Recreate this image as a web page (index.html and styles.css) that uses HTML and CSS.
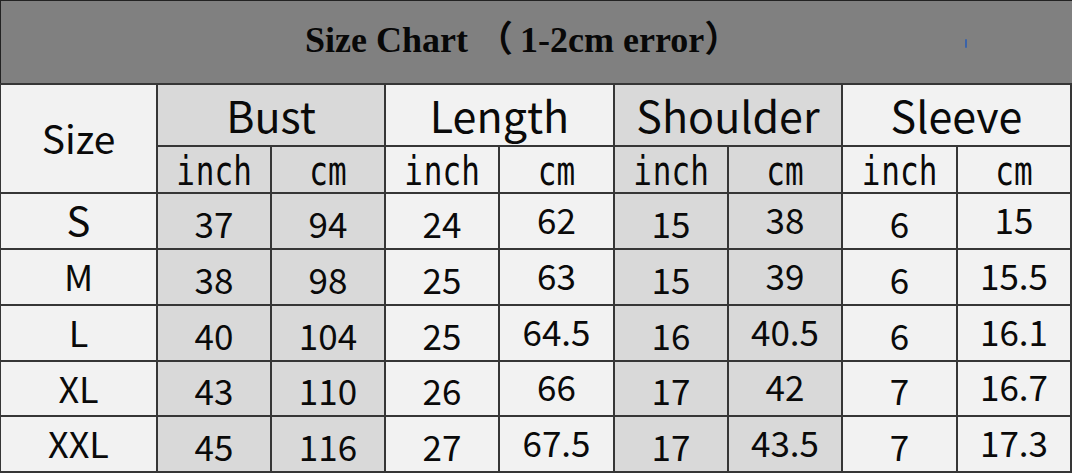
FILE: index.html
```html
<!DOCTYPE html>
<html lang="en">
<head>
<meta charset="utf-8">
<title>Size Chart</title>
<link rel="stylesheet" href="styles.css">
</head>
<body>
<div class="chart">
  <div class="title">
    <h1 class="title-text">Size Chart <span class="paren-open">（</span>1-2cm error）</h1>
    <span class="mark"></span>
  </div>
  <div class="grid">
    <div class="cell light size-head">Size</div>
    <div class="cell gray group span2">Bust</div>
    <div class="cell light group span2">Length</div>
    <div class="cell gray group span2">Shoulder</div>
    <div class="cell light group span2">Sleeve</div>

    <div class="cell gray sub"><span class="unit"><span class="ii">i</span>nch</span></div>
    <div class="cell gray sub"><span class="unit">cm</span></div>
    <div class="cell light sub"><span class="unit"><span class="ii">i</span>nch</span></div>
    <div class="cell light sub"><span class="unit">cm</span></div>
    <div class="cell gray sub"><span class="unit"><span class="ii">i</span>nch</span></div>
    <div class="cell gray sub"><span class="unit">cm</span></div>
    <div class="cell light sub"><span class="unit"><span class="ii">i</span>nch</span></div>
    <div class="cell light sub"><span class="unit">cm</span></div>

    <div class="cell light label big">S</div>
    <div class="cell gray num low">37</div>
    <div class="cell gray num low">94</div>
    <div class="cell light num low">24</div>
    <div class="cell light num high">62</div>
    <div class="cell gray num low">15</div>
    <div class="cell gray num high">38</div>
    <div class="cell light num low">6</div>
    <div class="cell light num high">15</div>

    <div class="cell light label">M</div>
    <div class="cell gray num low">38</div>
    <div class="cell gray num low">98</div>
    <div class="cell light num low">25</div>
    <div class="cell light num high">63</div>
    <div class="cell gray num low">15</div>
    <div class="cell gray num high">39</div>
    <div class="cell light num low">6</div>
    <div class="cell light num high">15.5</div>

    <div class="cell light label">L</div>
    <div class="cell gray num low">40</div>
    <div class="cell gray num low">104</div>
    <div class="cell light num low">25</div>
    <div class="cell light num high">64.5</div>
    <div class="cell gray num low">16</div>
    <div class="cell gray num high">40.5</div>
    <div class="cell light num low">6</div>
    <div class="cell light num high">16.1</div>

    <div class="cell light label">XL</div>
    <div class="cell gray num low">43</div>
    <div class="cell gray num low">110</div>
    <div class="cell light num low">26</div>
    <div class="cell light num high">66</div>
    <div class="cell gray num low">17</div>
    <div class="cell gray num high">42</div>
    <div class="cell light num low">7</div>
    <div class="cell light num high">16.7</div>

    <div class="cell light label">XXL</div>
    <div class="cell gray num low">45</div>
    <div class="cell gray num low">116</div>
    <div class="cell light num low">27</div>
    <div class="cell light num high">67.5</div>
    <div class="cell gray num low">17</div>
    <div class="cell gray num high">43.5</div>
    <div class="cell light num low">7</div>
    <div class="cell light num high">17.3</div>
  </div>
</div>
</body>
</html>
```

FILE: styles.css
```css
* {
  box-sizing: border-box;
}

html, body {
  margin: 0;
  padding: 0;
  background: #ffffff;
}

.chart {
  width: 1072px;
  height: 473px;
  overflow: hidden;
}

.title {
  position: relative;
  height: 83px;
  background: #808080;
  border-top: 1px solid #222222;
  border-left: 1px solid #222222;
  padding-top: 21px;
  padding-left: 304px;
  text-align: left;
}

.title-text {
  margin: 0;
  font-family: "Liberation Serif", "Noto Sans CJK SC", serif;
  font-weight: bold;
  font-size: 36px;
  line-height: 36px;
  color: #080808;
  white-space: nowrap;
}

.paren-open {
  margin-right: 7px;
}

.mark {
  position: absolute;
  left: 964px;
  top: 38px;
  width: 2px;
  height: 9px;
  background: #3b63a8;
  border-radius: 1px;
}

.grid {
  display: grid;
  grid-template-columns: 155px 112px 112px 112px 113px 112px 112px 113px 112px;
  grid-template-rows: 60px 45px 54px 54px 54px 53px 54px;
  gap: 2px;
  padding: 2px 2px 2px 1px;
  background: #363636;
  height: 390px;
}

.cell {
  display: flex;
  align-items: center;
  justify-content: center;
  color: #0a0a0a;
  font-family: "Noto Sans CJK JP", "Noto Sans", sans-serif;
  line-height: 1;
}

.light {
  background: #f2f2f2;
}

.gray {
  background: #d9d9d9;
}

.span2 {
  grid-column: span 2;
}

.size-head {
  grid-row: span 2;
  font-size: 39px;
  padding-bottom: 2px;
}

.group {
  font-size: 43px;
  padding-bottom: 2px;
}

.sub {
  padding-top: 4px;
}

.unit {
  display: inline-block;
  font-family: "DejaVu Sans Mono", "Liberation Mono", monospace;
  font-size: 31px;
  transform: scaleY(1.3);
}

.ii {
  margin-right: 1px;
}

.label {
  font-size: 36px;
  padding-bottom: 4px;
}

.label.big {
  font-size: 40px;
}

.num {
  font-size: 35px;
}

.num.low {
  padding-top: 2px;
}

.num.high {
  padding-bottom: 6px;
}
```
